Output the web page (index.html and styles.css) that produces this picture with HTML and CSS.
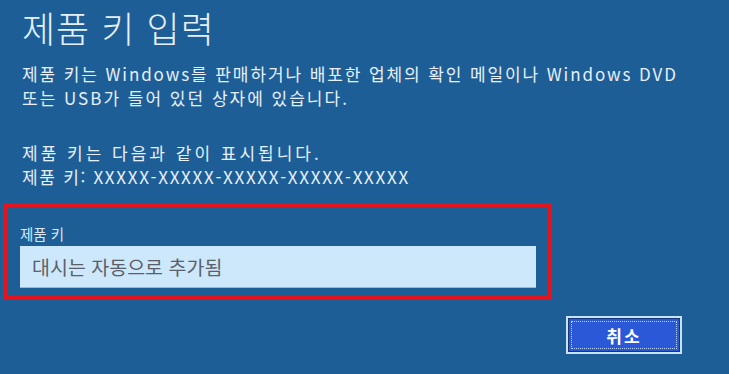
FILE: index.html
```html
<!DOCTYPE html>
<html lang="ko">
<head>
<meta charset="utf-8">
<link rel="stylesheet" href="styles.css">
</head>
<body>
<div class="dialog">
  <h1 class="title">제품 키 입력</h1>
  <p class="text first"><span class="line l1">제품 키는 Windows를 판매하거나 배포한 업체의 확인 메일이나 Windows DVD</span><span class="line">또는 USB가 들어 있던 상자에 있습니다.</span></p>
  <p class="text second"><span class="line l3">제품 키는 다음과 같이 표시됩니다.</span><span class="line l4">제품 키: XXXXX-XXXXX-XXXXX-XXXXX-XXXXX</span></p>
  <div class="field">
    <div class="label">제품 키</div>
    <div class="input"><span class="placeholder">대시는 자동으로 추가됨</span></div>
  </div>
  <div class="actions">
    <button class="btn"><span>취소</span></button>
  </div>
</div>
</body>
</html>
```
FILE: styles.css
```css
html, body {
  margin: 0;
  padding: 0;
  background: #1e5e97;
}
.dialog {
  width: 729px;
  height: 374px;
  font-family: "Noto Sans CJK KR", "Noto Sans", sans-serif;
  color: #e6f0f9;
  overflow: hidden;
}
.title {
  margin: 0;
  padding: 7px 0 0 22px;
  font-size: 36px;
  font-weight: 300;
  line-height: 40px;
  letter-spacing: 1px;
}
.text {
  margin: 0;
  padding-left: 22px;
  font-size: 17px;
  line-height: 24px;
  letter-spacing: 2px;
}
.line {
  display: block;
}
.line.l1 {
  letter-spacing: 1.9px;
}
.line.l3 {
  letter-spacing: 3px;
}
.line.l4 {
  letter-spacing: 1.7px;
}
.text.first {
  margin-top: 15px;
}
.text.second {
  margin-top: 31px;
}
.field {
  box-sizing: border-box;
  margin: 14px 0 0 3px;
  width: 549px;
  border: 4px solid #e3141c;
  padding: 15px 12px 8px 13px;
}
.label {
  font-size: 14.5px;
  line-height: 24px;
  color: #d9e8f5;
}
.input {
  height: 42px;
  background: #cde8fb;
  display: flex;
  align-items: center;
  padding-left: 12px;
  box-sizing: border-box;
  border-bottom: 1px solid #9cb9cf;
}
.placeholder {
  font-size: 19.5px;
  color: #5a6068;
}
.actions {
  display: flex;
  justify-content: flex-end;
  margin-top: 16px;
  padding-right: 47px;
}
.btn {
  position: relative;
  width: 116px;
  height: 38px;
  border: 2px solid #c6e3f8;
  box-shadow: inset 0 0 0 1px #17357f;
  background: #2a58d6;
  color: #ffffff;
  font-family: "Noto Sans CJK KR", sans-serif;
  font-size: 17px;
  font-weight: 700;
  letter-spacing: 2px;
  padding: 0;
}
.btn::after {
  content: "";
  position: absolute;
  inset: 3px;
  border: 1px dotted #b9d6f5;
}
```
